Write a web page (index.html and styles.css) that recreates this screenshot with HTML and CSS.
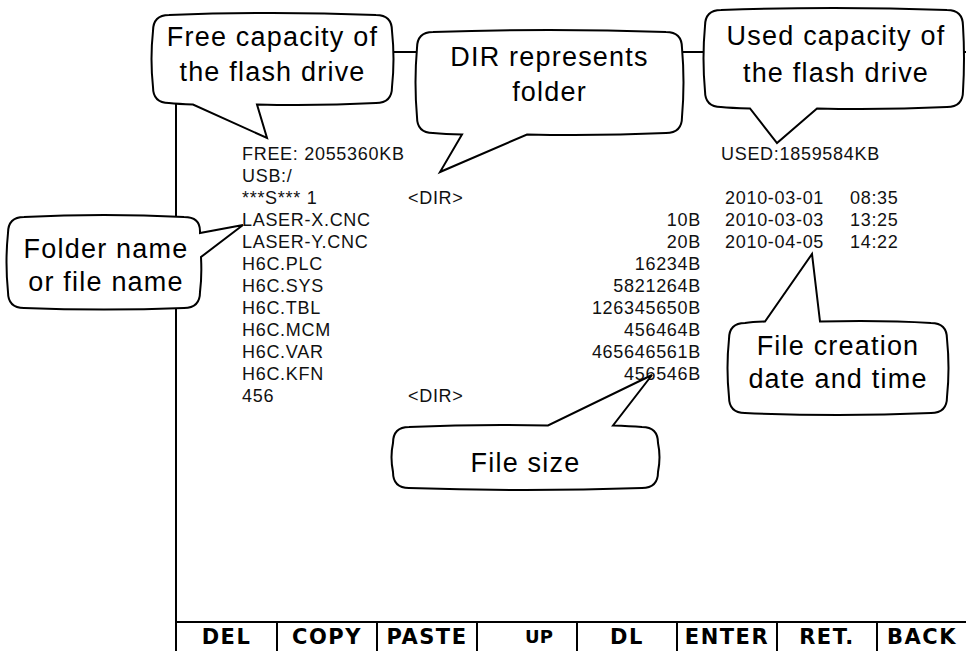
FILE: index.html
```html
<!DOCTYPE html>
<html>
<head>
    <meta charset="utf-8">
    <title>USB file list</title>
    <link rel="stylesheet" href="styles.css">
</head>
<body>
    <div class="screen">
        <div class="listing">
            <div class="row">
                <span class="span3">FREE: 2055360KB</span>
                <span class="used">USED:1859584KB</span>
            </div>
            <div class="row"><span>USB:/</span></div>
            <div class="row">
                <span>***S*** 1</span><span>&lt;DIR&gt;</span><span></span>
                <span class="date">2010-03-01</span><span>08:35</span>
            </div>
            <div class="row">
                <span>LASER-X.CNC</span><span></span><span class="size">10B</span>
                <span class="date">2010-03-03</span><span>13:25</span>
            </div>
            <div class="row">
                <span>LASER-Y.CNC</span><span></span><span class="size">20B</span>
                <span class="date">2010-04-05</span><span>14:22</span>
            </div>
            <div class="row"><span>H6C.PLC</span><span></span><span class="size">16234B</span></div>
            <div class="row"><span>H6C.SYS</span><span></span><span class="size">5821264B</span></div>
            <div class="row"><span>H6C.TBL</span><span></span><span class="size">126345650B</span></div>
            <div class="row"><span>H6C.MCM</span><span></span><span class="size">456464B</span></div>
            <div class="row"><span>H6C.VAR</span><span></span><span class="size">465646561B</span></div>
            <div class="row"><span>H6C.KFN</span><span></span><span class="size">456546B</span></div>
            <div class="row"><span>456</span><span>&lt;DIR&gt;</span></div>
        </div>
        <div class="softkeys">
            <div class="key">DEL</div>
            <div class="key">COPY</div>
            <div class="key">PASTE</div>
            <div class="key key-small">UP</div>
            <div class="key">DL</div>
            <div class="key">ENTER</div>
            <div class="key">RET.</div>
            <div class="key">BACK</div>
        </div>
    </div>

    <!-- annotation callouts drawn over the screen -->
    <svg class="callouts" width="966" height="651" viewBox="0 0 966 651">
        <path d="M169,15 Q272,11 376,15 Q392,15 392,31 Q395,59 392,87 Q392,103 376,103 Q318,106 257,104.5 L267,138 L193,104.5 Q178,104 169,103 Q153,103 153,87 Q150,59 153,31 Q153,15 169,15 Z"/>
        <path d="M433,32 Q549,28 666,32 Q682,32 682,48 Q685,82 682,117 Q682,133 666,133 Q598,136 527,134.5 L440,172 L462,134.5 Q445,134 433,133 Q417,133 417,117 Q414,82 417,48 Q417,32 433,32 Z"/>
        <path d="M721,10 Q834,6 947,10 Q963,10 963,26 Q965,58 963,91 Q963,107 947,107 Q883,110 817,108.5 L777,143 L750,108.5 Q730,108 721,107 Q705,107 705,91 Q702,58 705,26 Q705,10 721,10 Z"/>
        <path d="M24,217 Q104,213 184,217 Q200,217 200,231 L200,233 L243,225 L201,257 Q202,277 200,292 Q200,308 184,308 Q104,311 24,308 Q8,308 8,292 Q5,262 8,233 Q8,217 24,217 Z"/>
        <path d="M745,323 Q752,322 765,321.5 L812,254 L820,321.5 Q883,320 931,323 Q947,323 947,339 Q950,368 947,397 Q947,413 931,413 Q838,417 745,413 Q729,413 729,397 Q726,368 729,339 Q729,323 745,323 Z"/>
        <path d="M409,427 Q478,424 548,425.5 L652,375 L613,425.5 Q630,426 642,427 Q658,427 658,443 Q661,457 658,472 Q658,488 642,488 Q525,492 409,488 Q393,488 393,472 Q390,457 393,443 Q393,427 409,427 Z"/>
    </svg>
    <div class="note note-free">Free capacity of<br>the flash drive</div>
    <div class="note note-dir">DIR represents<br>folder</div>
    <div class="note note-used">Used capacity of<br>the flash drive</div>
    <div class="note note-name">Folder name<br>or file name</div>
    <div class="note note-date">File creation<br>date and time</div>
    <div class="note note-size">File size</div>
</body>
</html>
```

FILE: styles.css
```css
html, body
{
    margin: 0;
    padding: 0;
}
body
{
    position: relative;
    width: 966px;
    height: 651px;
    overflow: hidden;
    background-color: #fff;
    color: #000;
    font-family: "Liberation Sans", Arial, Helvetica, sans-serif;
}

/* the controller screen */
.screen
{
    box-sizing: border-box;
    margin: 51px 0 0 175px;
    height: 600px;
    border-left: 2px solid #000;
    border-top: 2px solid #000;
    display: flex;
    flex-direction: column;
}
.listing
{
    flex: 1;
    padding: 90px 0 0 65px;
    font-size: 18px;
    letter-spacing: 0.7px;
    color: #111;
}
.row
{
    display: grid;
    grid-template-columns: 166px 120px 173px 149px auto;
    height: 22px;
    line-height: 22px;
    white-space: nowrap;
}
.span3
{
    grid-column: 1 / 4;
}
.used
{
    grid-column: 4 / 6;
    padding-left: 20px;
}
.size
{
    text-align: right;
}
.date
{
    padding-left: 24px;
}

/* soft key bar */
.softkeys
{
    box-sizing: border-box;
    height: 30px;
    border-top: 2px solid #000;
    display: grid;
    grid-template-columns: 99px repeat(6, 100px) 1fr;
}
.key
{
    box-sizing: border-box;
    border-left: 2px solid #000;
    text-align: center;
    font-family: "DejaVu Sans", Verdana, sans-serif;
    font-weight: bold;
    font-size: 21px;
    letter-spacing: 1.5px;
    line-height: 28px;
}
.key:first-child
{
    border-left: none;
}
.key-small
{
    font-size: 18px;
    letter-spacing: 0;
    padding-left: 24px;
}

/* callouts */
.callouts
{
    position: absolute;
    left: 0;
    top: 0;
}
.callouts path
{
    fill: #fff;
    stroke: #000;
    stroke-width: 2;
}
.note
{
    position: absolute;
    text-align: center;
    font-size: 27px;
    letter-spacing: 1.2px;
    line-height: 35px;
    white-space: nowrap;
}
.note-free { left: 153px; top: 20px; width: 239px; }
.note-dir { left: 417px; top: 40px; width: 265px; }
.note-used { left: 705px; top: 18px; width: 262px; line-height: 37px; }
.note-name { left: 8px; top: 233px; width: 196px; line-height: 33px; }
.note-date { left: 729px; top: 330px; width: 218px; line-height: 33px; }
.note-size { left: 393px; top: 446px; width: 265px; }
```
